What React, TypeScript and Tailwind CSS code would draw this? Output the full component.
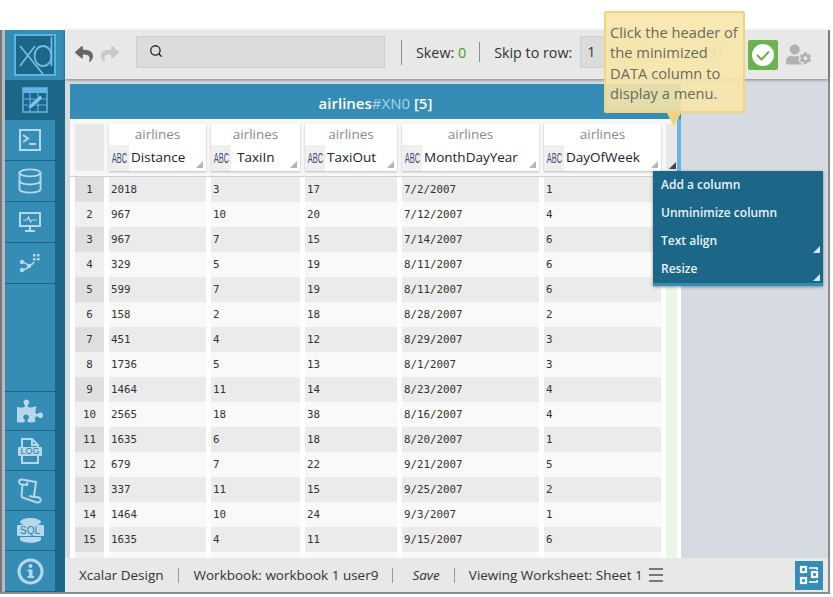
import { Search, Database } from "lucide-react";
import { FaPuzzlePiece, FaUserCog, FaReply, FaShare } from "react-icons/fa";

const rows = [
  ["1", "2018", "3", "17", "7/2/2007", "1"],
  ["2", "967", "10", "20", "7/12/2007", "4"],
  ["3", "967", "7", "15", "7/14/2007", "6"],
  ["4", "329", "5", "19", "8/11/2007", "6"],
  ["5", "599", "7", "19", "8/11/2007", "6"],
  ["6", "158", "2", "18", "8/28/2007", "2"],
  ["7", "451", "4", "12", "8/29/2007", "3"],
  ["8", "1736", "5", "13", "8/1/2007", "3"],
  ["9", "1464", "11", "14", "8/23/2007", "4"],
  ["10", "2565", "18", "38", "8/16/2007", "4"],
  ["11", "1635", "6", "18", "8/20/2007", "1"],
  ["12", "679", "7", "22", "9/21/2007", "5"],
  ["13", "337", "11", "15", "9/25/2007", "2"],
  ["14", "1464", "10", "24", "9/3/2007", "1"],
  ["15", "1635", "4", "11", "9/15/2007", "6"],
];

const columns = [
  { name: "Distance", width: "w-[97px]", pad: "pl-[2px]" },
  { name: "TaxiIn", width: "w-[89px]", pad: "pl-[6px]" },
  { name: "TaxiOut", width: "w-[92px]", pad: "pl-[2px]" },
  { name: "MonthDayYear", width: "w-[137px]", pad: "pl-[2px]" },
  { name: "DayOfWeek", width: "w-[117px]", pad: "pl-[2px]" },
];

function Corner({ className }: { className: string }) {
  return <span className={"absolute w-0 h-0 border-l-[7px] border-l-transparent border-b-[7px] " + className} />;
}

function ColumnHeader({ name, width, pad }: { name: string; width: string; pad: string }) {
  return (
    <div className={width + " h-[47px] bg-white shadow-[0_1px_2px_rgba(0,0,0,0.25)] flex flex-col shrink-0"}>
      <div className="h-[21px] text-center text-[13.5px] leading-[21px] text-[#8a8a8a]">airlines</div>
      <div className="relative flex h-[26px] items-center">
        <span className="w-[20px] h-full bg-[#efefef] flex items-center justify-center overflow-hidden">
          <span className="scale-x-[0.5] whitespace-nowrap font-['Liberation_Sans',sans-serif] text-[15px] font-medium text-[#3e4f78]">ABC</span>
        </span>
        <span className={pad + " pb-[2px] text-[13.5px] text-[#1c2230]"}>{name}</span>
        <Corner className="right-[3px] bottom-[3px] border-b-[#b5b5b5]" />
      </div>
    </div>
  );
}

function NavItem({ h, children, active }: { h: string; children: React.ReactNode; active?: boolean }) {
  return (
    <div className={h + " flex items-center justify-center " + (active ? "w-[60px] bg-[#1c6687]" : "w-[50px] bg-[#358cb5] border-b border-[#1c6687]")}>
      {children}
    </div>
  );
}

export default function App() {
  return (
    <div className="relative h-[597px] w-[833px] overflow-hidden bg-white font-['Open_Sans',sans-serif]">
      <div className="h-[30px]" />
      <div className="flex h-[564px] w-[830px] border-b-[2px] border-r-[2px] border-[#8c8c8c]">
        {/* window edge */}
        <div className="w-[5px] shrink-0 bg-[#b9b9b9] border-l-[2px] border-[#777]" />

        {/* SIDEBAR */}
        <div className="w-[60px] shrink-0 bg-[#1c6687] flex flex-col">
          <div className="h-[50px] bg-[#358cb5] flex items-center justify-center">
            <svg width="42" height="42" viewBox="0 0 42 42">
              <rect x="1" y="1" width="40" height="40" fill="#1c6687" stroke="#5fb3e0" strokeWidth="2" />
              <path d="M6 12 L29 40 M21 12 L6 32" stroke="#6fbde8" strokeWidth="1.8" fill="none" />
              <ellipse cx="29" cy="22" rx="8.5" ry="10" stroke="#6fbde8" strokeWidth="1.8" fill="none" />
              <path d="M37.5 3 V32" stroke="#6fbde8" strokeWidth="1.8" fill="none" />
            </svg>
          </div>
          <NavItem h="h-[40px]" active>
            <svg width="26" height="26" viewBox="0 0 26 26">
              <rect x="1" y="1" width="24" height="24" fill="none" stroke="#63b5e8" strokeWidth="1.5" />
              <rect x="1" y="1" width="24" height="5" fill="#63b5e8" />
              <path d="M1 12 H25 M1 18 H25 M8 6 V25 M16 6 V25" stroke="#63b5e8" strokeWidth="1.2" />
              <path d="M6 22 L7 18 L18 8 L21 11 L10 21 Z" fill="#7cc5f0" stroke="#1c6687" strokeWidth="0.8" />
            </svg>
          </NavItem>
          <NavItem h="h-[41px]">
            <svg width="22" height="22" viewBox="0 0 22 22" fill="none" stroke="#b5d9ea" strokeWidth="2">
              <rect x="1" y="1" width="20" height="20" />
              <path d="M4 6 L9 9.5 L4 13 M10 15 H17" />
            </svg>
          </NavItem>
          <NavItem h="h-[41px]">
            <Database size={28} color="#b5d9ea" strokeWidth={1.6} />
          </NavItem>
          <NavItem h="h-[41px]">
            <svg width="22" height="20" viewBox="0 0 22 20" fill="none" stroke="#b5d9ea" strokeWidth="2">
              <rect x="1" y="1" width="20" height="13" />
              <path d="M4 8 H8 L9.5 5 L11.5 10 L13 8 H18" strokeWidth="1.2" />
              <path d="M11 14 V18 M6 19 H16" />
            </svg>
          </NavItem>
          <NavItem h="h-[41px]">
            <svg width="24" height="20" viewBox="0 0 24 20" fill="#b5d9ea">
              <circle cx="4" cy="9" r="2.2" />
              <circle cx="4" cy="17" r="2.2" />
              <circle cx="11" cy="13" r="2.2" />
              <rect x="15" y="1" width="2.5" height="2.5" />
              <rect x="19" y="1" width="2.5" height="2.5" />
              <rect x="15" y="5" width="2.5" height="2.5" />
              <rect x="19" y="5" width="2.5" height="2.5" />
              <path d="M4 9 Q7 9 11 13 Q14 12 16 9 M4 17 Q8 17 11 13" stroke="#b5d9ea" strokeWidth="1.6" fill="none" />
            </svg>
          </NavItem>
          <div className="flex-1 w-[50px] bg-[#358cb5] border-b border-[#1c6687]" />
          <NavItem h="h-[39px]">
            <FaPuzzlePiece size={26} color="#b5d9ea" />
          </NavItem>
          <NavItem h="h-[40px]">
            <div className="relative w-[24px] h-[26px]">
              <svg width="24" height="26" viewBox="0 0 24 26" fill="none" stroke="#b5d9ea" strokeWidth="2">
                <path d="M4 9 V1 H14 L20 7 V9 M4 18 V25 H20 V18 M14 1 V7 H20" />
              </svg>
              <span className="absolute left-0 top-[9px] h-[9px] w-[24px] rounded-[1px] bg-[#b5d9ea] text-center font-['Liberation_Sans',sans-serif] text-[9px] leading-[9px] text-[#2f7fa6]">LOG</span>
            </div>
          </NavItem>
          <NavItem h="h-[40px]">
            <svg width="24" height="26" viewBox="0 0 24 26" fill="none" stroke="#b5d9ea" strokeWidth="2" strokeLinejoin="round">
              <path d="M4 1.5 L18 4 L16 19 M4 1.5 Q0.5 1.5 1.2 4.5 Q1.8 6.5 4.5 6.5 L9 7 L9.5 4 M4.5 6.5 L3.5 18 Q3.5 19.5 5 19.8 L19 24.5 Q22.5 24.8 22.8 22 Q22.5 18.5 16 19 L11 18" />
            </svg>
          </NavItem>
          <NavItem h="h-[40px]">
            <div className="relative w-[27px] h-[25px]">
              <svg width="27" height="25" viewBox="0 0 27 25" fill="#b5d9ea">
                <ellipse cx="13.5" cy="4" rx="10.5" ry="4" />
                <path d="M3 19 V21 C3 26 24 26 24 21 V19 Z" />
              </svg>
              <span className="absolute left-0 top-[7px] h-[11px] w-[27px] rounded-[1px] bg-[#b5d9ea] text-center font-['Liberation_Sans',sans-serif] text-[10px] leading-[11px] text-[#2f7fa6]">SQL</span>
            </div>
          </NavItem>
          <NavItem h="h-[41px]">
            <svg width="27" height="27" viewBox="0 0 27 27" fill="#b5d9ea">
              <circle cx="13.5" cy="13.5" r="11.5" fill="none" stroke="#b5d9ea" strokeWidth="3" />
              <circle cx="13.5" cy="8" r="2" />
              <path d="M10.5 11.5 H15.5 V18 H17 V20 H10.5 V18 H12 V13.5 H10.5 Z" />
            </svg>
          </NavItem>
        </div>

        {/* MAIN */}
        <div className="flex-1 flex flex-col min-w-0 bg-[#d5dbe0]">
          {/* TOP BAR */}
          <div className="h-[49px] shrink-0 bg-[#e8e8e8] shadow-[0_1px_3px_rgba(0,0,0,0.4)] z-10 flex items-center pb-[5px] text-[14.3px] text-[#333]">
            <FaReply size={18} color="#666" className="ml-[10px] mt-[3px]" />
            <FaShare size={18} color="#c8c8c8" className="ml-[8px] mt-[3px]" />
            <div className="ml-[17px] flex h-[32px] w-[249px] items-start border border-[#cfcfcf] bg-[#dcdcdc] pl-[12px] pt-[7px]">
              <Search size={14} color="#222" strokeWidth={2.2} />
            </div>
            <div className="ml-[16px] h-[25px] w-px bg-[#8f8f8f]" />
            <span className="ml-[14px] mt-[2px]">Skew: <span className="text-[#3f9e1f]">0</span></span>
            <div className="ml-[13px] h-[20px] w-px bg-[#8f8f8f]" />
            <span className="ml-[14px] mt-[2px]">Skip to row:</span>
            <div className="ml-[8px] flex h-[32px] w-[67px] items-center border border-[#cfcfcf] bg-[#dcdcdc] pl-[6px]">1</div>
            <div className="ml-[51px] h-[25px] w-px bg-[#d8d8d8]" />
            <span className="ml-[9px] w-[15px] text-[#999]">91</span>
            <div className="ml-[15px] h-[25px] w-px bg-[#d8d8d8]" />
            <div className="ml-[9px] mt-[5px] flex h-[30px] w-[30px] shrink-0 items-center justify-center rounded-[2px] bg-[#6cb24f]">
              <svg width="24" height="24" viewBox="0 0 24 24">
                <circle cx="12" cy="12" r="11" fill="#fff" />
                <path d="M6 12 L10.5 16.5 L18 8.5" fill="none" stroke="#6cb24f" strokeWidth="2" />
              </svg>
            </div>
            <FaUserCog size={25} color="#b2b2b2" className="ml-[8px] mt-[5px] shrink-0" />
          </div>

          {/* TABLE PANEL */}
          <div className="flex-1 min-h-0 pl-[5px] pt-[5px] flex">
            <div className="w-[611px] h-full bg-white flex flex-col overflow-hidden">
              <div className="h-[35px] shrink-0 bg-[#358cb5] text-center text-[15px] leading-[38px] font-semibold text-white">
                airlines<span className="font-normal text-[#a9d4e8]">#XN0</span> [5]
              </div>
              <div className="flex h-[58px] shrink-0 gap-[5px] bg-[#f7f7f7] pl-[5px] pt-[5px] border-b border-[#d0d0d0]">
                <div className="w-[29px] h-[47px] bg-[#e8e8e8] shrink-0" />
                {columns.map((c) => (
                  <ColumnHeader key={c.name} {...c} />
                ))}
                <div className="relative w-[11px] h-[47px] bg-[#e8e8e8] shrink-0">
                  <Corner className="right-[1px] bottom-[2px] border-b-[#444]" />
                </div>
                <div className="-ml-[5px] w-[4px] h-[53px] -mt-[5px] bg-[#63b5e8] shrink-0" />
              </div>
              <div className="flex-1 pl-[5px] font-['DejaVu_Sans_Mono',monospace] text-[10.8px] text-[#333]">
                {rows.map((r, i) => (
                  <div key={r[0]} className="flex gap-[5px] h-[25px]">
                    <div className={"w-[29px] text-center leading-[25px] shrink-0 " + (i % 2 === 0 ? "bg-[#dfdfdf]" : "bg-[#efefef]")}>{r[0]}</div>
                    {columns.map((c, j) => (
                      <div key={c.name} className={c.width + " pl-[2px] leading-[25px] shrink-0 " + (i % 2 === 0 ? "bg-[#ebebeb]" : "bg-[#f9f9f9]")}>
                        {r[j + 1]}
                      </div>
                    ))}
                    <div className="w-[11px] shrink-0 bg-[#ebf5ea]" />
                  </div>
                ))}
                <div className="flex gap-[5px] h-[10px]">
                  <div className="w-[29px] bg-[#efefef] shrink-0" />
                  {columns.map((c) => (
                    <div key={c.name} className={c.width + " bg-[#f9f9f9] shrink-0"} />
                  ))}
                  <div className="w-[11px] shrink-0 bg-[#ebf5ea]" />
                </div>
              </div>
            </div>
          </div>

          {/* BOTTOM BAR */}
          <div className="h-[34px] shrink-0 bg-[#e8e8e8] flex items-center pl-[14px] text-[13.5px] text-[#333]">
            <span>Xcalar Design</span>
            <div className="ml-[14px] h-[15px] w-px bg-[#999]" />
            <span className="ml-[15px]">Workbook: workbook 1 user9</span>
            <div className="ml-[14px] h-[15px] w-px bg-[#999]" />
            <span className="ml-[19px] italic">Save</span>
            <div className="ml-[14px] h-[15px] w-px bg-[#999]" />
            <span className="ml-[14px]">Viewing Worksheet: Sheet 1</span>
            <div className="ml-[6px] flex flex-col gap-[4px]">
              <span className="h-[2px] w-[14px] bg-[#777]" />
              <span className="h-[2px] w-[14px] bg-[#777]" />
              <span className="h-[2px] w-[14px] bg-[#777]" />
            </div>
            <div className="ml-auto mr-[5px] flex h-[29px] w-[28px] items-center justify-center bg-[#358cb5]">
              <svg width="20" height="20" viewBox="0 0 20 20" fill="none" stroke="#fff" strokeWidth="2.2">
                <rect x="2" y="2" width="5" height="5" />
                <rect x="13" y="7" width="5" height="5" />
                <rect x="2" y="13" width="5" height="5" />
                <path d="M10 3 H18 V5 M10 17 H18 V15" strokeWidth="1.6" />
              </svg>
            </div>
          </div>
        </div>
      </div>

      {/* TOOLTIP */}
      <div className="absolute z-20 left-[604px] top-[11px] w-[141px] h-[102px] rounded-[2px] border-2 border-[#f0d580] bg-[#f7e5aa]/90 pl-[4px] pt-[9px] text-[14.7px] leading-[20.3px] text-[#6b6b5c]">
        Click the header of the minimized DATA column to display a menu.
      </div>
      <span className="absolute z-20 left-[667px] top-[113px] w-0 h-0 border-l-[7px] border-r-[7px] border-t-[14px] border-l-transparent border-r-transparent border-t-[#f0d580]" />

      {/* COLUMN MENU */}
      <div className="absolute z-20 left-[653px] top-[171px] w-[170px] h-[115px] bg-[#1c6687] border-b-[3px] border-[#358cb5] shadow-[0_1px_3px_rgba(0,0,0,0.4)] text-[12px] font-semibold text-[#e8f3f8]">
        {["Add a column", "Unminimize column", "Text align", "Resize"].map((label, i) => (
          <div key={label} className="relative h-[28px] pl-[8px] leading-[28px]">
            {label}
            {i > 1 && <Corner className="right-[3px] bottom-[2px] border-b-[#d0e6f0]" />}
          </div>
        ))}
      </div>
    </div>
  );
}
